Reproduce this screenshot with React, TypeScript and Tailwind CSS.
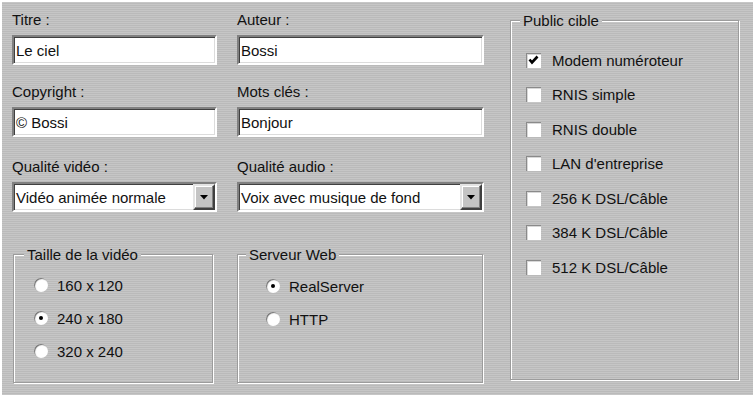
import React from 'react';

// Striped Win9x-like dialog background; bg-fixed keeps legends aligned with the stripes
const STRIPES =
  'bg-[image:repeating-linear-gradient(to_bottom,#c6c6c6_0px,#c6c6c6_1px,#bababa_1px,#bababa_2px)] bg-fixed';

const SUNKEN =
  'border-2 border-t-[#808080] border-l-[#808080] border-b-white border-r-white shadow-[inset_1px_1px_0_#404040,inset_-1px_-1px_0_#dcdcdc]';

const RAISED =
  'border-2 border-t-[#e4e4e4] border-l-[#e4e4e4] border-b-[#404040] border-r-[#404040] shadow-[inset_-1px_-1px_0_#808080,inset_1px_1px_0_#ffffff] bg-[#c4c4c4]';

function TextField({ label, value }: { label: string; value: string }) {
  return (
    <div className="flex flex-col">
      <div className="h-[17px] leading-[17px] mt-[1px]">{label}</div>
      <div className={`mt-[7px] h-[30px] bg-white flex items-center pl-[2px] ${SUNKEN}`}>
        <span className="leading-[17px] whitespace-nowrap">{value}</span>
      </div>
    </div>
  );
}

function SelectField({ label, value }: { label: string; value: string }) {
  return (
    <div className="flex flex-col">
      <div className="h-[17px] leading-[17px] mt-[1px]">{label}</div>
      <div className={`mt-[7px] h-[30px] bg-white flex items-center pl-[2px] ${SUNKEN}`}>
        <span className="flex-1 leading-[17px] whitespace-nowrap">{value}</span>
        <div className={`w-[22px] h-full flex items-center justify-center ${RAISED}`}>
          <svg width="8" height="5" viewBox="0 0 8 5">
            <polygon points="0,0 8,0 4,4.5" fill="#000" />
          </svg>
        </div>
      </div>
    </div>
  );
}

function GroupBox({
  title,
  titleLeft,
  className,
  children,
}: {
  title: string;
  titleLeft: string;
  className: string;
  children: React.ReactNode;
}) {
  return (
    <div
      className={`relative border border-[#9c9c9c] shadow-[1px_1px_0_#ffffff,inset_1px_1px_0_#ffffff] ${className}`}
    >
      <span
        className={`absolute top-[-9px] h-[17px] leading-[17px] px-[3px] whitespace-nowrap ${STRIPES} ${titleLeft}`}
      >
        {title}
      </span>
      {children}
    </div>
  );
}

function Radio({ label, checked }: { label: string; checked?: boolean }) {
  return (
    <div className="h-[20px] flex items-center gap-[9px]">
      <div className="w-[14px] h-[14px] rounded-full bg-white shadow-[inset_1px_1px_1px_#6e6e6e] flex items-center justify-center">
        {checked && <div className="w-[4px] h-[4px] rounded-full bg-black" />}
      </div>
      <span className="leading-[17px] whitespace-nowrap">{label}</span>
    </div>
  );
}

function Checkbox({ label, checked }: { label: string; checked?: boolean }) {
  return (
    <div className="h-[20px] flex items-center gap-[11px]">
      <div className="w-[15px] h-[15px] bg-white shadow-[inset_1px_1px_0_#8a8a8a,inset_2px_2px_0_#d8d8d8] flex items-center justify-center">
        {checked && (
          <svg width="11" height="10" viewBox="0 0 11 10">
            <polyline points="1.5,4.5 4,7.5 9.5,1.5" fill="none" stroke="#000" strokeWidth="2.6" />
          </svg>
        )}
      </div>
      <span className="leading-[17px] whitespace-nowrap">{label}</span>
    </div>
  );
}

const targets = [
  { label: 'Modem numéroteur', checked: true },
  { label: 'RNIS simple' },
  { label: 'RNIS double' },
  { label: "LAN d'entreprise" },
  { label: '256 K DSL/Câble' },
  { label: '384 K DSL/Câble' },
  { label: '512 K DSL/Câble' },
];

export default function App() {
  return (
    <div
      className={`w-[753px] h-[395px] border-t-2 border-l-2 border-white flex font-['Liberation_Sans',Arial,sans-serif] text-[15px] text-[#111] ${STRIPES}`}
    >
      <div className="pl-[10px] pt-[8px] flex flex-col">
        <div className="grid grid-cols-[205px_247px] gap-x-[20px]">
          <TextField label="Titre :" value="Le ciel" />
          <TextField label="Auteur :" value="Bossi" />
        </div>
        <div className="mt-[17px] grid grid-cols-[205px_247px] gap-x-[20px]">
          <TextField label="Copyright :" value="© Bossi" />
          <TextField label="Mots clés :" value="Bonjour" />
        </div>
        <div className="mt-[20px] grid grid-cols-[205px_247px] gap-x-[20px]">
          <SelectField label="Qualité vidéo :" value="Vidéo animée normale" />
          <SelectField label="Qualité audio :" value="Voix avec musique de fond" />
        </div>
        <div className="mt-[42px] grid grid-cols-[205px_247px] gap-x-[20px]">
          <GroupBox title="Taille de la vidéo" titleLeft="left-[10px]" className="ml-[1px] w-[200px] h-[129px]">
            <div className="pl-[20px] pt-[20px] flex flex-col gap-[13px]">
              <Radio label="160 x 120" />
              <Radio label="240 x 180" checked />
              <Radio label="320 x 240" />
            </div>
          </GroupBox>
          <GroupBox title="Serveur Web" titleLeft="left-[8px]" className="w-[246px] h-[129px]">
            <div className="pl-[28px] pt-[21px] flex flex-col gap-[13px]">
              <Radio label="RealServer" checked />
              <Radio label="HTTP" />
            </div>
          </GroupBox>
        </div>
      </div>
      <GroupBox title="Public cible" titleLeft="left-[9px]" className="ml-[26px] mt-[18px] w-[229px] h-[360px]">
        <div className="pl-[15px] pt-[29px] flex flex-col gap-[14.6px]">
          {targets.map((t) => (
            <Checkbox key={t.label} label={t.label} checked={t.checked} />
          ))}
        </div>
      </GroupBox>
    </div>
  );
}
